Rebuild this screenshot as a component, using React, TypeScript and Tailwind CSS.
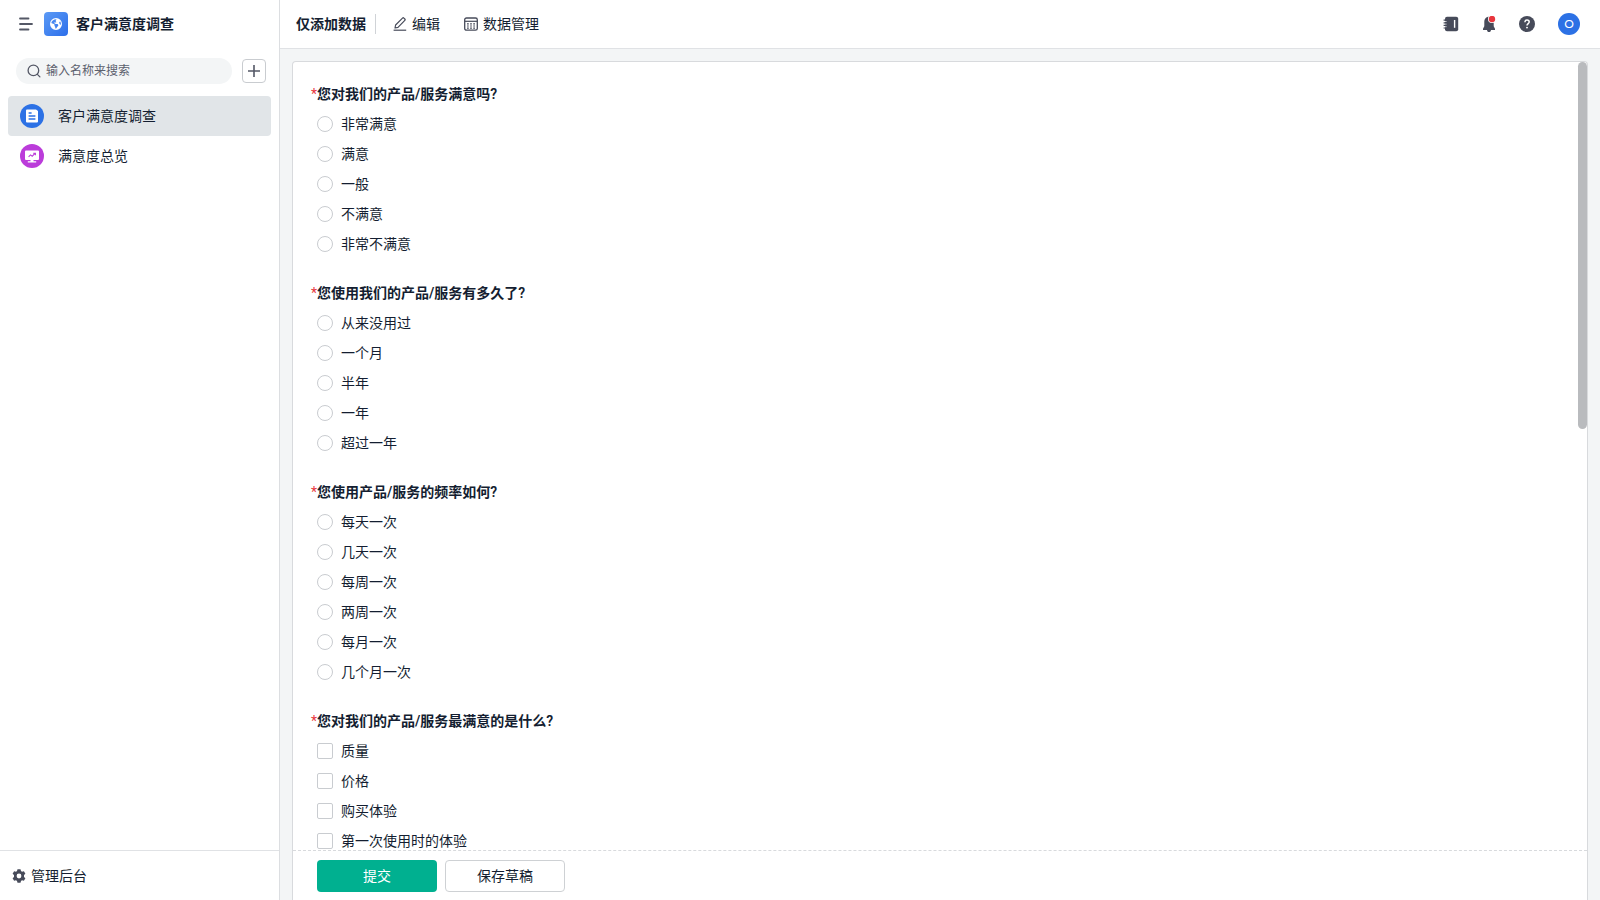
import React, { useState } from "react";
import { FaEarthAmericas } from "react-icons/fa6";

type Question = {
  id: string;
  title: string;
  type: "radio" | "checkbox";
  options: string[];
};

const QUESTIONS: Question[] = [
  {
    id: "satisfaction",
    title: "您对我们的产品/服务满意吗?",
    type: "radio",
    options: ["非常满意", "满意", "一般", "不满意", "非常不满意"],
  },
  {
    id: "duration",
    title: "您使用我们的产品/服务有多久了?",
    type: "radio",
    options: ["从来没用过", "一个月", "半年", "一年", "超过一年"],
  },
  {
    id: "frequency",
    title: "您使用产品/服务的频率如何?",
    type: "radio",
    options: ["每天一次", "几天一次", "每周一次", "两周一次", "每月一次", "几个月一次"],
  },
  {
    id: "best",
    title: "您对我们的产品/服务最满意的是什么?",
    type: "checkbox",
    options: ["质量", "价格", "购买体验", "第一次使用时的体验"],
  },
];

const MenuIcon = () => (
  <svg width="14" height="14" viewBox="0 0 14 14" fill="none" stroke="#545866" strokeWidth="1.8" strokeLinecap="round">
    <path d="M1 1.5h8.5M1 7h12M1 12.5h8.5" />
  </svg>
);

const SearchIcon = () => (
  <svg width="14" height="14" viewBox="0 0 14 14" fill="none" stroke="#545866" strokeWidth="1.3" strokeLinecap="round">
    <circle cx="6.4" cy="6.4" r="5.3" />
    <path d="m10.4 10.4 2.5 2.5" />
  </svg>
);

const PlusIcon = () => (
  <svg width="12" height="12" viewBox="0 0 12 12" stroke="#545866" strokeWidth="1.6">
    <path d="M6 0v12M0 6h12" />
  </svg>
);

const FormIcon = () => (
  <svg width="12" height="14" viewBox="0 0 12 14">
    <path d="M1 .5h9L12 2v10.500a1 1 0 0 1-1 1H1a1 1 0 0 1-1-1v-11a1 1 0 0 1 1-1z" fill="#fff" />
    <path d="M2.6 4h3M2.600 7h6.800M2.600 10h6.800" stroke="#2c71e5" strokeWidth="1.4" />
  </svg>
);

const DashboardIcon = () => (
  <svg width="14" height="13" viewBox="0 0 14 13">
    <path d="M1 .5h12a1 1 0 0 1 1 1v7.500a1 1 0 0 1-1 1H8.500v1.300h2.700v1.200H2.800v-1.200h2.700V10H1a1 1 0 0 1-1-1V1.500a1 1 0 0 1 1-1z" fill="#fff" />
    <path d="M3.6 6.8 5.5 4.900l1.700 1.300 2.600-2.500M8.200 3.200h2.200v2" fill="none" stroke="#bb3cda" strokeWidth="1.1" />
  </svg>
);

const GearIcon = () => (
  <svg width="14" height="14" viewBox="0 0 14 14">
    <path
      fillRule="evenodd"
      d="M5.5.2h3l.5 1.900 1 .6 1.900-.5 1.500 2.500-1.400 1.400v1.800l1.400 1.400-1.500 2.500-1.900-.5-1 .6-.5 1.900h-3L5 11.900l-1-.6-1.900.5L.6 9.300 2 7.900V6.100L.6 4.700l1.500-2.500 1.900.5 1-.6zM7 4.600a2.400 2.400 0 1 0 0 4.800 2.400 2.400 0 0 0 0-4.800z"
      fill="#474b5a"
    />
  </svg>
);

const EditIcon = () => (
  <svg width="14" height="14" viewBox="0 0 14 14" fill="none" stroke="#474b5a" strokeWidth="1.2" strokeLinejoin="round">
    <path d="M2 11l.6-3L9.500 1.100a1 1 0 0 1 1.400 0l.9.9a1 1 0 0 1 0 1.400L5 10.300z" />
    <path d="M.6 13.2h12.600" />
  </svg>
);

const DataIcon = () => (
  <svg width="14" height="14" viewBox="0 0 14 14" fill="none" stroke="#474b5a">
    <rect x=".7" y="1" width="12.6" height="12.2" rx="1.8" strokeWidth="1.3" />
    <path d="M.7 4.300h12.600" strokeWidth="1.200" />
    <path
      d="M3 6.900h1.800M6.100 6.900h1.800M9.200 6.900h1.800M3 9h1.800M6.100 9h1.800M9.200 9h1.800M3 11.100h1.800M6.100 11.100h1.800M9.200 11.100h1.800"
      strokeWidth="1.2"
    />
  </svg>
);

const ContactsIcon = () => (
  <svg width="16" height="16" viewBox="0 0 16 16">
    <rect x="2" y=".8" width="13.2" height="14.4" rx="2" fill="#474b5a" />
    <path d="M.6 4.200h3M.6 6.800h3M.6 9.400h3M.6 12h3" stroke="#474b5a" strokeWidth="1.2" />
    <path d="M2 5.500h1.600M2 8.100h1.600M2 10.700h1.600" stroke="#fff" strokeWidth=".7" />
    <path d="M11.600 4v7.800" stroke="#fff" strokeWidth="1.4" />
  </svg>
);

const BellIcon = () => (
  <svg width="16" height="16" viewBox="0 0 16 16">
    <path d="M8 .8c-3 0-4.700 2.200-4.700 5v4.400L2 12.800v1.300h4a2 2 0 0 0 4 0h4v-1.300l-1.300-2.600V5.800C12.700 3 11 .8 8 .8z" fill="#474b5a" />
    <circle cx="11" cy="3" r="4" fill="#fff" />
    <circle cx="11" cy="3" r="3.200" fill="#e8363d" />
  </svg>
);

const HelpIcon = () => (
  <svg width="16" height="16" viewBox="0 0 16 16" fill="none">
    <circle cx="8" cy="8" r="8" fill="#474b5a" />
    <path d="M5.900 6.300C5.900 4.900 6.800 4.100 8 4.100s2.200.8 2.200 2c0 1.500-2.200 1.700-2.200 3.400" stroke="#fff" strokeWidth="1.5" />
    <circle cx="8" cy="11.600" r=".95" fill="#fff" />
  </svg>
);

const Sidebar: React.FC = () => {
  const [keyword, setKeyword] = useState("");

  return (
    <aside className="flex w-[280px] shrink-0 flex-col border-r border-[#dcdee1] bg-white">
      <div className="flex h-12 items-center pl-[19px]">
        <button type="button" aria-label="菜单">
          <MenuIcon />
        </button>
        <span className="ml-[11px] flex size-6 items-center justify-center rounded bg-gradient-to-br from-[#5c9af5] to-[#2c6eea]">
          <FaEarthAmericas className="size-3 text-white" />
        </span>
        <h1 className="ml-2 font-semibold">客户满意度调查</h1>
      </div>

      <div className="mt-[10px] flex items-center gap-[10px] pr-[13px] pl-4">
        <label className="flex h-[26px] min-w-0 flex-1 items-center gap-[5px] rounded-full bg-[#f3f5f6] pl-[11px]">
          <SearchIcon />
          <input
            type="text"
            value={keyword}
            onChange={(e) => setKeyword(e.target.value)}
            placeholder="输入名称来搜索"
            aria-label="输入名称来搜索"
            className="min-w-0 flex-1 bg-transparent text-xs outline-none placeholder:text-[#5b606d]"
          />
        </label>
        <button
          type="button"
          aria-label="新建"
          className="flex size-6 items-center justify-center rounded border border-[#c9ccd0]"
        >
          <PlusIcon />
        </button>
      </div>

      <nav className="mt-3 flex-1 px-2">
        <a href="#survey" className="flex h-10 items-center gap-[14px] rounded bg-[#e1e5e8] pl-3">
          <span className="flex size-6 items-center justify-center rounded-full bg-[#2c71e5]">
            <FormIcon />
          </span>
          客户满意度调查
        </a>
        <a href="#overview" className="flex h-10 items-center gap-[14px] rounded pl-3">
          <span className="flex size-6 items-center justify-center rounded-full bg-[#bb3cda]">
            <DashboardIcon />
          </span>
          满意度总览
        </a>
      </nav>

      <div className="flex h-[50px] items-center border-t border-[#e0e2e5] pl-3">
        <button type="button" className="flex items-center gap-[5px]">
          <GearIcon />
          管理后台
        </button>
      </div>
    </aside>
  );
};

const Header: React.FC = () => (
  <header className="flex h-[49px] shrink-0 items-center border-b border-[#e0e2e5] bg-white pr-5 pl-4">
    <button type="button" className="font-semibold">
      仅添加数据
    </button>
    <span className="ml-[9px] h-5 w-px bg-[#d0d3d7]" />
    <button type="button" className="ml-[17px] flex items-center gap-[5px]">
      <EditIcon />
      编辑
    </button>
    <button type="button" className="ml-6 flex items-center gap-[5px]">
      <DataIcon />
      数据管理
    </button>

    <div className="ml-auto flex items-center gap-[22px]">
      <button type="button" aria-label="通讯录">
        <ContactsIcon />
      </button>
      <button type="button" aria-label="通知">
        <BellIcon />
      </button>
      <button type="button" aria-label="帮助">
        <HelpIcon />
      </button>
    </div>
    <button
      type="button"
      className="ml-[23px] flex size-[22px] items-center justify-center rounded-full bg-[#2c71e5] font-[Lato,sans-serif] text-xs text-white"
    >
      O
    </button>
  </header>
);

const QuestionField: React.FC<{ question: Question }> = ({ question }) => (
  <fieldset>
    <legend className="flex h-[30px] items-center font-semibold">
      <span className="w-[6px] font-normal text-[#e8363d]">*</span>
      {question.title}
    </legend>
    {question.options.map((option) => (
      <div key={option} className="flex h-[30px] items-center pl-[6px]">
        <label className="flex items-center gap-2">
          <input
            type={question.type}
            name={question.id}
            value={option}
            className={`size-4 appearance-none border border-[#c9ccd0] bg-white checked:border-[#00b090] checked:bg-[#00b090] ${
              question.type === "radio" ? "rounded-full" : "rounded-xs"
            }`}
          />
          {option}
        </label>
      </div>
    ))}
  </fieldset>
);

export default function App() {
  return (
    <div className="flex h-screen bg-[#f3f5f6] font-[Roboto,'Noto_Sans_CJK_SC',sans-serif] text-sm text-[#141e31]">
      <Sidebar />

      <div className="flex min-w-0 flex-1 flex-col">
        <Header />

        <main className="flex min-h-0 flex-1 px-3 pt-3">
          <form
            onSubmit={(e) => e.preventDefault()}
            className="relative flex min-w-0 flex-1 flex-col rounded-t border border-b-0 border-[#d8dadd] bg-white"
          >
            <div className="flex min-h-0 flex-1 flex-col gap-[19px] overflow-hidden px-[18px] pt-[17px]">
              {QUESTIONS.map((q) => (
                <QuestionField key={q.id} question={q} />
              ))}
            </div>

            {/* scroll thumb */}
            <div className="absolute top-0 right-0 h-7/16 w-[9px] rounded-full bg-[#b9bbbe]" />

            <div className="flex shrink-0 gap-2 border-t border-dashed border-[#d8dadd] px-6 pt-[9px] pb-2">
              <button type="submit" className="h-8 w-[120px] rounded bg-[#00b090] text-white">
                提交
              </button>
              <button type="button" className="h-8 w-[120px] rounded border border-[#ced1d4] bg-white">
                保存草稿
              </button>
            </div>
          </form>
        </main>
      </div>
    </div>
  );
}
